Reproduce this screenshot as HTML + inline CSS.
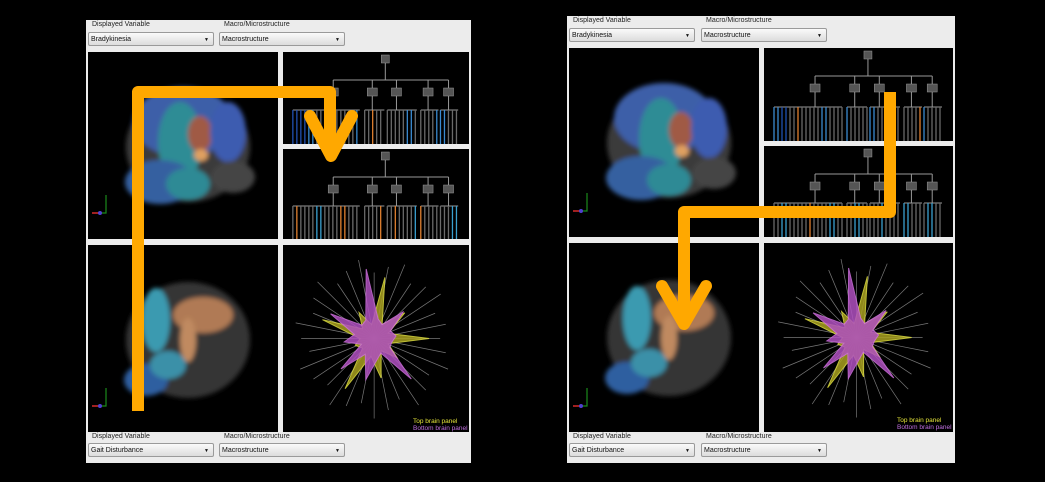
<!DOCTYPE html>
<html><head><meta charset="utf-8"><style>
body{margin:0;width:1045px;height:482px;background:#000;overflow:hidden;position:relative;font-family:"Liberation Sans",sans-serif}
.panel{position:absolute;background:#ececec}
.lbl{position:absolute;font-size:7px;color:#222}
.dd{position:absolute;height:14px;background:linear-gradient(#fafafa,#dcdcdc);border:1px solid #9a9a9a;border-radius:2px;font-size:7px;color:#111;line-height:14px;padding-left:2px;box-sizing:border-box}
.dd:after{content:"▼";position:absolute;right:4px;font-size:5px;top:0}
.view{position:absolute;background:#000;overflow:hidden}
svg{position:absolute;left:0;top:0}
</style></head><body>
<div class="panel" id="p1" style="left:86px;top:20px;width:385px;height:443px">
<div class="lbl" style="left:6px;top:1px">Displayed Variable</div>
<div class="lbl" style="left:138px;top:1px">Macro/Microstructure</div>
<div class="dd" style="left:2px;top:12px;width:126px">Bradykinesia</div>
<div class="dd" style="left:133px;top:12px;width:126px">Macrostructure</div>
<div class="lbl" style="left:6px;top:413px">Displayed Variable</div>
<div class="lbl" style="left:138px;top:413px">Macro/Microstructure</div>
<div class="dd" style="left:2px;top:423px;width:126px">Gait Disturbance</div>
<div class="dd" style="left:133px;top:423px;width:126px">Macrostructure</div>
<div class="lbl" style="left:327px;top:398px;color:#e6e63a;font-size:6.5px">Top brain panel</div>
<div class="lbl" style="left:327px;top:405px;color:#c070e0;font-size:6.5px">Bottom brain panel</div>
</div>
<div class="panel" id="p2" style="left:567px;top:16px;width:388px;height:447px">
<div class="lbl" style="left:6px;top:1px">Displayed Variable</div>
<div class="lbl" style="left:139px;top:1px">Macro/Microstructure</div>
<div class="dd" style="left:2px;top:12px;width:126px">Bradykinesia</div>
<div class="dd" style="left:134px;top:12px;width:126px">Macrostructure</div>
<div class="lbl" style="left:6px;top:417px">Displayed Variable</div>
<div class="lbl" style="left:139px;top:417px">Macro/Microstructure</div>
<div class="dd" style="left:2px;top:427px;width:126px">Gait Disturbance</div>
<div class="dd" style="left:134px;top:427px;width:126px">Macrostructure</div>
<div class="lbl" style="left:330px;top:401px;color:#e6e63a;font-size:6.5px">Top brain panel</div>
<div class="lbl" style="left:330px;top:408px;color:#c070e0;font-size:6.5px">Bottom brain panel</div>
</div>
<svg width="1045" height="482" style="z-index:5" fill="none" stroke="#ffa800" stroke-width="12" stroke-linejoin="round">
<path d="M138 411 V92 H330 V150"/>
<path d="M310 116 L331 156 L352 116" stroke-linecap="round"/>
<path d="M890 92 V212 H684 V320"/>
<path d="M662 286 L684 324 L706 286" stroke-linecap="round"/>
</svg>
<script>
const NS="http://www.w3.org/2000/svg";
function view(p,x,y,w,h){const d=document.createElement('div');d.className='view';Object.assign(d.style,{left:x+'px',top:y+'px',width:w+'px',height:h+'px'});p.appendChild(d);const s=document.createElementNS(NS,'svg');s.setAttribute('width',w);s.setAttribute('height',h);d.appendChild(s);return s}
function el(s,t,a){const e=document.createElementNS(NS,t);for(const k in a)e.setAttribute(k,a[k]);s.appendChild(e);return e}
function axes(s,h){el(s,'path',{d:`M8 ${h-26} h10 v-18`,stroke:'#1a8a1a','stroke-width':1.2,fill:'none'});el(s,'path',{d:`M4 ${h-26} h8`,stroke:'#a02020','stroke-width':2});el(s,'circle',{cx:12,cy:h-26,r:2,fill:'#5040d0'})}
let fid=0;
function brainTop(s,h){const id='f'+(fid++);
el(s,'defs',{}).innerHTML=`<filter id="${id}"><feGaussianBlur stdDeviation="2.5"/></filter>`;
const g=el(s,'g',{filter:`url(#${id})`});
el(g,'ellipse',{cx:100,cy:95,rx:62,ry:55,fill:'#3a3a3a'});
el(g,'ellipse',{cx:95,cy:70,rx:50,ry:35,fill:'#3d5fa8'});
el(g,'ellipse',{cx:92,cy:90,rx:22,ry:40,fill:'#2e8c95'});
el(g,'ellipse',{cx:112,cy:82,rx:12,ry:18,fill:'#a05a45'});
el(g,'ellipse',{cx:72,cy:130,rx:35,ry:22,fill:'#3560a0'});
el(g,'ellipse',{cx:100,cy:132,rx:22,ry:16,fill:'#2d8a95'});
el(g,'ellipse',{cx:113,cy:103,rx:7,ry:6,fill:'#e0a060'});
el(g,'ellipse',{cx:140,cy:80,rx:18,ry:30,fill:'#3c5cb0'});
el(g,'ellipse',{cx:145,cy:125,rx:22,ry:16,fill:'#444'});axes(s,h)}
function brainBot(s,h){const id='f'+(fid++);
el(s,'defs',{}).innerHTML=`<filter id="${id}"><feGaussianBlur stdDeviation="2.5"/></filter>`;
const g=el(s,'g',{filter:`url(#${id})`});
el(g,'ellipse',{cx:100,cy:95,rx:62,ry:58,fill:'#353535'});
el(g,'ellipse',{cx:68,cy:75,rx:14,ry:32,fill:'#3a9ab0'});
el(g,'ellipse',{cx:115,cy:70,rx:30,ry:18,fill:'#b07a55'});
el(g,'ellipse',{cx:100,cy:95,rx:8,ry:22,fill:'#c08a60'});
el(g,'ellipse',{cx:58,cy:135,rx:22,ry:16,fill:'#2d5ea0'});
el(g,'ellipse',{cx:80,cy:120,rx:18,ry:14,fill:'#3a90a8'});axes(s,h)}
function tree(s,w,h,top){
const c=w*0.55,xs=[w*0.27,w*0.48,w*0.61,w*0.78,w*0.89];
el(s,'line',{x1:c,y1:8,x2:c,y2:28,stroke:'#999'});el(s,'rect',{x:c-4,y:3,width:8,height:8,fill:'#555',stroke:'#999','stroke-width':.5});
el(s,'line',{x1:xs[0],y1:28,x2:xs[4],y2:28,stroke:'#999'});
const spans=[[10,78],[83,103],[106,136],[140,158],[160,178]].map(a=>a.map(v=>v*w/189));
const by=Math.round(h*0.63);
xs.forEach((x,i)=>{el(s,'line',{x1:x,y1:28,x2:x,y2:by,stroke:'#999'});el(s,'rect',{x:x-5,y:36,width:10,height:8,fill:'#555',stroke:'#999','stroke-width':.5});
const [a,b]=spans[i];el(s,'line',{x1:a,y1:by,x2:b,y2:by,stroke:'#999'});
let k=0;for(let X=a;X<=b;X+=4,k++){let col='#6a6a6a';const r=Math.sin(X*12.7+i*3+(top?0:5));if(r>0.9)col=top?'#3a8ad0':'#3aa0d0';else if(r<-0.96)col='#e08030';else if(top&&i==0&&k<4)col='#2050b0';el(s,'line',{x1:X,y1:by,x2:X,y2:h,stroke:col,'stroke-width':1.3})}});}
function radar(s,w,h){const cx=w*0.49,cy=h*0.5;for(let i=0;i<32;i++){const a=i/32*2*Math.PI,r=66+(i%3)*7;el(s,'line',{x1:cx,y1:cy,x2:cx+r*Math.cos(a),y2:cy+r*Math.sin(a),stroke:'#aaa','stroke-width':.7,opacity:.7})}
const star=(rs,off)=>rs.map((r,i)=>{const a=i/rs.length*2*Math.PI+off;return (cx+r*Math.cos(a)).toFixed(1)+','+(cy+r*Math.sin(a)).toFixed(1)}).join(' ');
el(s,'polygon',{points:star([55,15,30,14,40,18,58,15,20,14,55,15,30,14,62,16,40,15],0),fill:'#a8a020',stroke:'#e0e040','stroke-width':1,opacity:.85});
el(s,'polygon',{points:star([18,18,55,16,22,42,18,45,14,30,20,50,18,20,70,20,16,40,18,22],0.2),fill:'#b050c0',stroke:'#d070e0','stroke-width':1,opacity:.85});}
function build(pid,W,H){const p=document.getElementById(pid);const lw=190,top=32,g=6,th=(H-top-31-g);const hh=Math.round(th/2);
const rw=W-lw-2-5-2;brainTop(view(p,2,top,lw,hh),hh);brainBot(view(p,2,top+hh+g,lw,th-hh-g+6),th-hh);
const t1=Math.round(hh/2)-2;tree(view(p,lw+7,top,rw,t1),rw,t1,true);tree(view(p,lw+7,top+t1+5,rw,hh-t1-5),rw,hh-t1-5,false);
radar(view(p,lw+7,top+hh+g,rw,th-hh-g+6),rw,th-hh);
p.querySelectorAll('.lbl').forEach(l=>{if(l.style.color)p.appendChild(l)});}
build('p1',385,443);build('p2',388,447);
</script>
</body></html>
